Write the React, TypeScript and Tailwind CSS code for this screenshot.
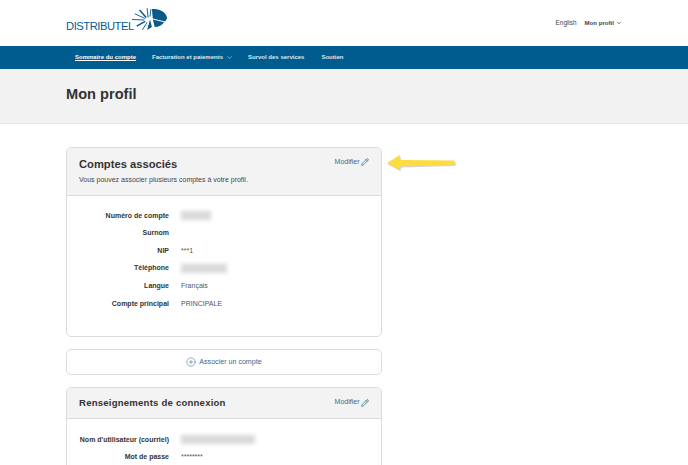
import React from 'react';
import { ChevronDown, CirclePlus, Pencil } from 'lucide-react';

const rowsOne = [
  { label: 'Numéro de compte', blur: 'w-[30px]' },
  { label: 'Surnom' },
  { label: 'NIP', value: '***1' },
  { label: 'Téléphone', blur: 'w-[46px]' },
  { label: 'Langue', value: 'Français' },
  { label: 'Compte principal', value: 'PRINCIPALE' },
];

function Logo() {
  return (
    <div className="flex items-end">
      <span className="w-[66px] text-[11.2px] leading-[11px] tracking-[-0.45px] text-[#0b5a8c] whitespace-nowrap mb-[-1px]">
        DISTRIBUTEL
      </span>
      <svg width="35" height="23" viewBox="0 0 37 24">
        <path d="M21 1 C29 0 36 4 37 10 C37 12 36 13 35 14 L22 11 Z" fill="#0b5a8c" />
        <path d="M22 12 L34 15 C32 18 28 20 24 20 Z" fill="#0b5a8c" />
        <path d="M19 12 L21 20 L16 23 Z" fill="#0b5a8c" />
        <g stroke="#0b5a8c" strokeWidth="1" fill="none">
          <path d="M17 10 L16 0" />
          <path d="M15 10 L8 2" strokeWidth="1.6" />
          <path d="M14 11 L3 6" />
          <path d="M13 12.5 L0 12" />
          <path d="M14 14 L5 19" strokeWidth="1.6" />
          <path d="M16 15 L11 23" />
          <path d="M19 9 L20 1" />
        </g>
      </svg>
    </div>
  );
}

function Row({ label, value, blur }: { label: string; value?: string; blur?: string }) {
  return (
    <div className="flex items-center h-[17.6px]">
      <div className="w-[102px] text-right font-bold text-[#333] text-[7px] whitespace-nowrap">{label}</div>
      <div className="ml-[12px] text-[#555] text-[7px]">
        {value}
        {blur && <div className={`${blur} h-[9px] bg-[#d8d8d8] blur-[2px]`} />}
      </div>
    </div>
  );
}

function ModifierLink() {
  return (
    <a className="flex items-center gap-[1.5px] text-[7px] text-[#2c6e94]">
      Modifier
      <Pencil size={8} strokeWidth={2} className="text-[#1f5f85]" />
    </a>
  );
}

export default function App() {
  return (
    <div className="h-[465px] overflow-hidden bg-white font-['Liberation_Sans',sans-serif]">
      <header className="h-[46px] flex items-center justify-between pl-[66px] pr-[66px]">
        <div className="mt-[-7px]">
          <Logo />
        </div>
        <div className="flex items-center gap-[8px] text-[#444]">
          <span className="text-[6.4px]">English</span>
          <span className="flex items-center gap-[2px] font-bold text-[6.1px]">
            Mon profil
            <ChevronDown size={6} strokeWidth={3} />
          </span>
        </div>
      </header>

      <nav className="h-[23px] bg-[#005b8e] flex items-center pl-[75px] gap-[17px] text-[6px] font-bold text-[#dfe9f0]">
        <span className="underline text-white mr-[-1px]">Sommaire du compte</span>
        <span className="flex items-center gap-[3px] mr-[-2px]">
          Facturation et paiements
          <ChevronDown size={7} strokeWidth={2} />
        </span>
        <span>Survol des services</span>
        <span>Soutien</span>
      </nav>

      <div className="h-[55px] bg-[#f2f2f2] border-b border-[#e6e6e6] flex items-center pl-[66px]">
        <h1 className="text-[14.6px] font-bold text-[#333] mt-[-3px]">Mon profil</h1>
      </div>

      <main className="ml-[66px] pt-[23px] w-[316px]">
        <div className="relative">
          <section className="h-[190px] border border-[#dcdcdc] rounded-[5px] overflow-hidden">
            <div className="h-[48px] bg-[#f3f3f3] border-b border-[#dcdcdc] px-[12px] pt-[9px]">
              <div className="flex justify-between items-start">
                <h2 className="text-[11.2px] leading-[15px] font-bold text-[#333]">Comptes associés</h2>
                <ModifierLink />
              </div>
              <p className="text-[7px] text-[#444] mt-[3px]">Vous pouvez associer plusieurs comptes à votre profil.</p>
            </div>
            <div className="pt-[11px]">
              {rowsOne.map((r) => (
                <Row key={r.label} label={r.label} value={r.value} blur={r.blur} />
              ))}
            </div>
          </section>
          <svg width="72" height="20" viewBox="0 0 72 20" className="absolute left-[320px] top-[6px]">
            <path d="M1 10 L14 2 Q13 6 15 7 L68 7.5 Q70 9.5 68 11.5 L15 13 Q13 14 14 17 Z" fill="#a8a48c" opacity="0.45" transform="translate(1 1.5)" />
            <path d="M1 10 L14 2 Q13 6 15 7 L68 7.5 Q70 9.5 68 11.5 L15 13 Q13 14 14 17 Z" fill="#fddc3e" />
          </svg>
        </div>

        <a className="mt-[12px] h-[26px] border border-[#dcdcdc] rounded-[5px] flex items-center justify-center gap-[3px] text-[7.1px] text-[#2c6e94]">
          <CirclePlus size={10} strokeWidth={1.3} />
          Associer un compte
        </a>

        <section className="mt-[12px] h-[200px] border border-[#dcdcdc] rounded-[5px] overflow-hidden">
          <div className="h-[31px] bg-[#f3f3f3] border-b border-[#dcdcdc] px-[12px] flex items-center justify-between">
            <h2 className="text-[9.6px] font-bold text-[#333] tracking-[0.2px] mt-[1px]">Renseignements de connexion</h2>
            <div className="mt-[-1px]">
              <ModifierLink />
            </div>
          </div>
          <div className="pt-[12px]">
            <Row label="Nom d'utilisateur (courriel)" blur="w-[74px]" />
            <Row label="Mot de passe" value="********" />
          </div>
        </section>
      </main>
    </div>
  );
}
